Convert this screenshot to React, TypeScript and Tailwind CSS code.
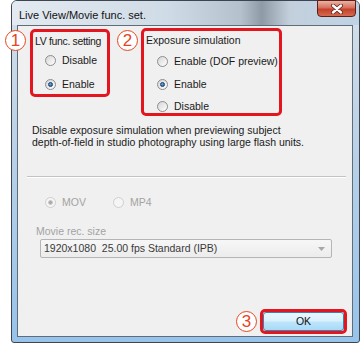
import React from 'react';

const Radio: React.FC<{ checked?: boolean; disabled?: boolean }> = ({ checked, disabled }) => {
  const ring = disabled ? 'border-[#cfcfcf] bg-[#f5f5f5]' : 'border-[#8b8d8f] bg-[linear-gradient(135deg,#d5d5d5,#ffffff)]';
  const dot = disabled ? 'bg-[#a9a9a9] border-[#c9c9c9]' : 'bg-[radial-gradient(circle_at_40%_35%,#6fb3ea,#0d4f95)] border-[#1b3e66]';
  return (
    <span className={`w-[11px] h-[11px] rounded-full border flex items-center justify-center shrink-0 ${ring}`}>
      {checked && <span className={`w-[5px] h-[5px] rounded-full border-[0.5px] ${dot}`} />}
    </span>
  );
};

const Option: React.FC<{ label: string; checked?: boolean; disabled?: boolean; className?: string }> = ({ label, checked, disabled, className = '' }) => (
  <div className={`flex items-center gap-[6px] h-[13px] leading-[13px] ${disabled ? 'text-[#a3a3a3]' : 'text-[#1a1a1a]'} ${className}`}>
    <Radio checked={checked} disabled={disabled} />
    <span>{label}</span>
  </div>
);

// red callout number drawn over the window
const Callout: React.FC<{ n: string; className: string }> = ({ n, className }) => (
  <div className={`absolute w-[21px] h-[21px] rounded-full border-[1.5px] border-[#e6461f] bg-white text-[#e6461f] flex items-center justify-center text-[17px] leading-none ${className}`}>
    {n}
  </div>
);

export default function App() {
  return (
    <div className="relative w-[362px] h-[344px] bg-white overflow-hidden font-['Liberation_Sans',Arial,sans-serif] text-[10.5px]">
      <div className="ml-[11px] w-[349px] h-[343px] border border-[#3d4650] rounded-t-[6px] rounded-b-[3px] bg-[linear-gradient(180deg,#d6dfe8_0%,#bcd2e7_40%,#97c3ea_100%)] flex flex-col pl-[5px] pr-[6px] pb-[5px]">
        {/* title bar */}
        <div className="h-[24px] flex items-start justify-between bg-[linear-gradient(90deg,#e3eaf1_0%,#cfdbe6_45%,#b4c1cc_66%,#8e9aa5_72%,#c3d0dc_80%,#bfd3e6_100%)] -ml-[5px] -mr-[6px] pl-[7px] pr-[3px] rounded-t-[5px]">
          <span className="pt-[8px] leading-[13px] text-[11px] text-[#111]">Live View/Movie func. set.</span>
          <div className="w-[39px] h-[17px] -mt-[1px] rounded-b-[4px] border border-[#5b2118] bg-[linear-gradient(180deg,#eab3a5_0%,#d7705d_45%,#c3412b_55%,#d56a4f_100%)] flex items-center justify-center">
            <svg width="14" height="10" viewBox="0 0 14 10">
              <path d="M3 1.5 L11 8.5 M11 1.5 L3 8.5" stroke="#5a2018" strokeWidth="4" strokeLinecap="round" />
              <path d="M3 1.5 L11 8.5 M11 1.5 L3 8.5" stroke="#ffffff" strokeWidth="2.4" strokeLinecap="round" />
            </svg>
          </div>
        </div>

        {/* client area */}
        <div className="flex-1 flex flex-col border border-[#5f6d7a] bg-[#f0f0f0]">
          <div className="flex items-start pl-[12px] pt-[2px]">
            <div className="mt-[1px] w-[80px] h-[68px] border-[3px] border-[#e3161f] rounded-[5px] flex flex-col pl-[2px] pt-[3px]">
              <div className="leading-[12px] tracking-[-0.35px] whitespace-nowrap text-[#1a1a1a]">LV func. setting</div>
              <Option label="Disable" className="mt-[7px] ml-[10px]" />
              <Option label="Enable" checked className="mt-[11px] ml-[10px]" />
            </div>
            <div className="ml-[31px] w-[141px] h-[88px] border-[3px] border-[#e3161f] rounded-[5px] flex flex-col pl-[2px] pt-[3px]">
              <div className="leading-[12px] text-[#1a1a1a]">Exposure simulation</div>
              <Option label="Enable (DOF preview)" className="mt-[9px] ml-[11px]" />
              <Option label="Enable" checked className="mt-[10px] ml-[11px]" />
              <Option label="Disable" className="mt-[9px] ml-[11px]" />
            </div>
          </div>

          <p className="mt-[8px] pl-[14px] leading-[12px] text-[#1a1a1a]">
            Disable exposure simulation when previewing subject
            <br />
            depth-of-field in studio photography using large flash units.
          </p>

          <div className="mt-[28px] ml-[9px] mr-[6px] h-[2px] border-t border-[#c3c3c3] border-b border-b-white" />

          <div className="mt-[18px] pl-[27px] flex items-center">
            <Option label="MOV" checked disabled className="w-[68px]" />
            <Option label="MP4" disabled />
          </div>

          <div className="mt-[16px] pl-[18px] leading-[13px] text-[#a3a3a3]">Movie rec. size</div>
          <div className="mt-[1px] ml-[22px] w-[292px] h-[19px] border border-[#b5b5b5] rounded-[2px] bg-[linear-gradient(180deg,#f7f7f7,#ececec)] flex items-center justify-between pl-[3px] pr-[6px] text-[#3a3a3a]">
            <span>1920x1080&nbsp; 25.00 fps Standard (IPB)</span>
            <svg width="7" height="4" viewBox="0 0 7 4">
              <path d="M0 0 H7 L3.5 4 Z" fill="#a8a8a8" />
            </svg>
          </div>

          <div className="mt-auto flex justify-end pr-[5px] pb-[2px]">
            <div className="w-[87px] h-[25px] border-[3px] border-[#e3161f] rounded-[5px]">
              <button className="w-full h-full border border-[#3c7fb1] rounded-[3px] bg-[linear-gradient(180deg,#eaf6fd_0%,#d9f0fc_48%,#bee6fd_52%,#a7d9f5_100%)] text-[#111] leading-none">
                OK
              </button>
            </div>
          </div>
        </div>
      </div>

      <Callout n="1" className="left-[5px] top-[30px]" />
      <Callout n="2" className="left-[117px] top-[30px]" />
      <Callout n="3" className="left-[236px] top-[311px]" />
    </div>
  );
}
